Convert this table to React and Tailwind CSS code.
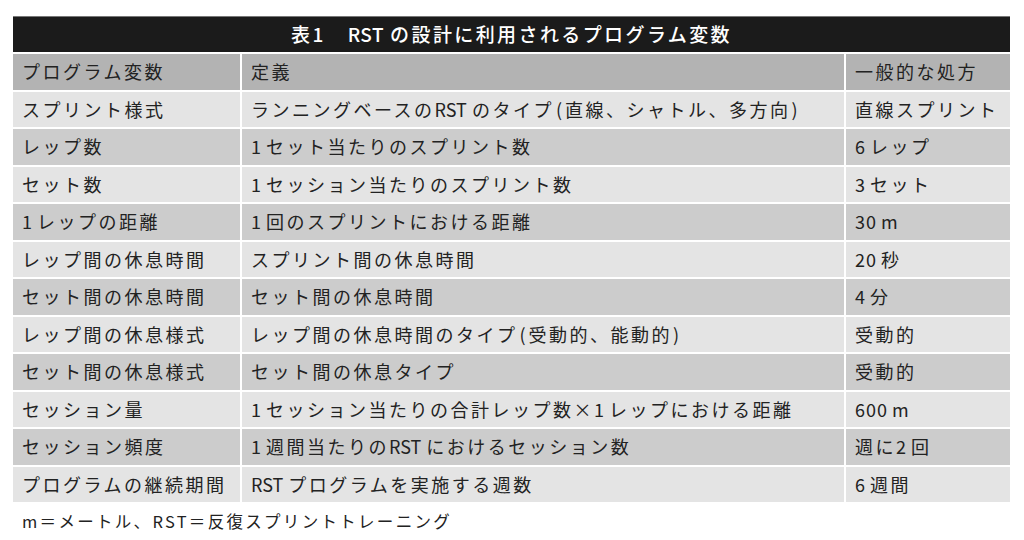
import React from "react";

const rows = [
  ["スプリント様式", "ランニングベースのRSTのタイプ(直線、シャトル、多方向)", "直線スプリント"],
  ["レップ数", "1セット当たりのスプリント数", "6レップ"],
  ["セット数", "1セッション当たりのスプリント数", "3セット"],
  ["1レップの距離", "1回のスプリントにおける距離", "30m"],
  ["レップ間の休息時間", "スプリント間の休息時間", "20秒"],
  ["セット間の休息時間", "セット間の休息時間", "4分"],
  ["レップ間の休息様式", "レップ間の休息時間のタイプ(受動的、能動的)", "受動的"],
  ["セット間の休息様式", "セット間の休息タイプ", "受動的"],
  ["セッション量", "1セッション当たりの合計レップ数×1レップにおける距離", "600m"],
  ["セッション頻度", "1週間当たりのRSTにおけるセッション数", "週に2回"],
  ["プログラムの継続期間", "RSTプログラムを実施する週数", "6週間"],
];

const font = { fontFamily: '"Noto Sans CJK JP", "Noto Sans", sans-serif' };

function Txt({ text }) {
  const parts = text.split(/([0-9]+|[A-Za-z]+|[()])/).filter((p) => p !== "");
  return (
    <>
      {parts.map((p, i) => {
        if (/^[0-9]+$/.test(p)) {
          return (
            <span key={i} className="tracking-[1px] mr-[4px]">
              {p}
            </span>
          );
        }
        if (/^[A-Za-z]+$/.test(p)) {
          const last = i === parts.length - 1;
          return (
            <span key={i} className={last ? "tracking-[0px]" : "tracking-[0px] mr-[5px]"}>
              {p}
            </span>
          );
        }
        if (p === "(") return <span key={i} className="tracking-[0px] ml-[2px] mr-[3px]">(</span>;
        if (p === ")") return <span key={i} className="tracking-[0px] ml-[1px]">)</span>;
        return <span key={i}>{p}</span>;
      })}
    </>
  );
}

export default function App() {
  return (
    <div className="w-[1024px] h-[540px] bg-white overflow-hidden" style={font}>
      <div className="pt-[16px] pl-[13px]">
        <div className="w-[997px] flex flex-col gap-[2px]">
          <div className="h-[36px] bg-[#1b1b1b] border-t border-[#777] flex items-center justify-center text-white text-[19px] font-medium tracking-[2.4px]">
            <span>表1</span>
            <span className="ml-[22px] tracking-[0.5px] mr-[6px]">RST</span>
            <span>の設計に利用されるプログラム変数</span>
          </div>
          <div className="grid grid-cols-[227px_602px_164px] gap-x-[2px] gap-y-[2px] text-[18px] text-[#222] tracking-[2.5px]">
            <div className="h-[35.5px] bg-[#b3b3b3] flex items-center pl-[9px]">プログラム変数</div>
            <div className="h-[35.5px] bg-[#b3b3b3] flex items-center pl-[9px]">定義</div>
            <div className="h-[35.5px] bg-[#b3b3b3] flex items-center pl-[9px]">一般的な処方</div>
            {rows.map((r, i) => {
              const bg = i % 2 === 0 ? "bg-[#e4e4e4]" : "bg-[#cccccc]";
              return (
                <React.Fragment key={i}>
                  <div className={`h-[35.5px] ${bg} flex items-center pl-[9px] whitespace-nowrap`}><Txt text={r[0]} /></div>
                  <div className={`h-[35.5px] ${bg} flex items-center pl-[9px] whitespace-nowrap`}><Txt text={r[1]} /></div>
                  <div className={`h-[35.5px] ${bg} flex items-center pl-[9px] whitespace-nowrap`}><Txt text={r[2]} /></div>
                </React.Fragment>
              );
            })}
          </div>
        </div>
        <div className="mt-[7px] pl-[9px] text-[16.5px] text-[#222] tracking-[2.3px]">
          m＝メートル、RST＝反復スプリントトレーニング
        </div>
      </div>
    </div>
  );
}
